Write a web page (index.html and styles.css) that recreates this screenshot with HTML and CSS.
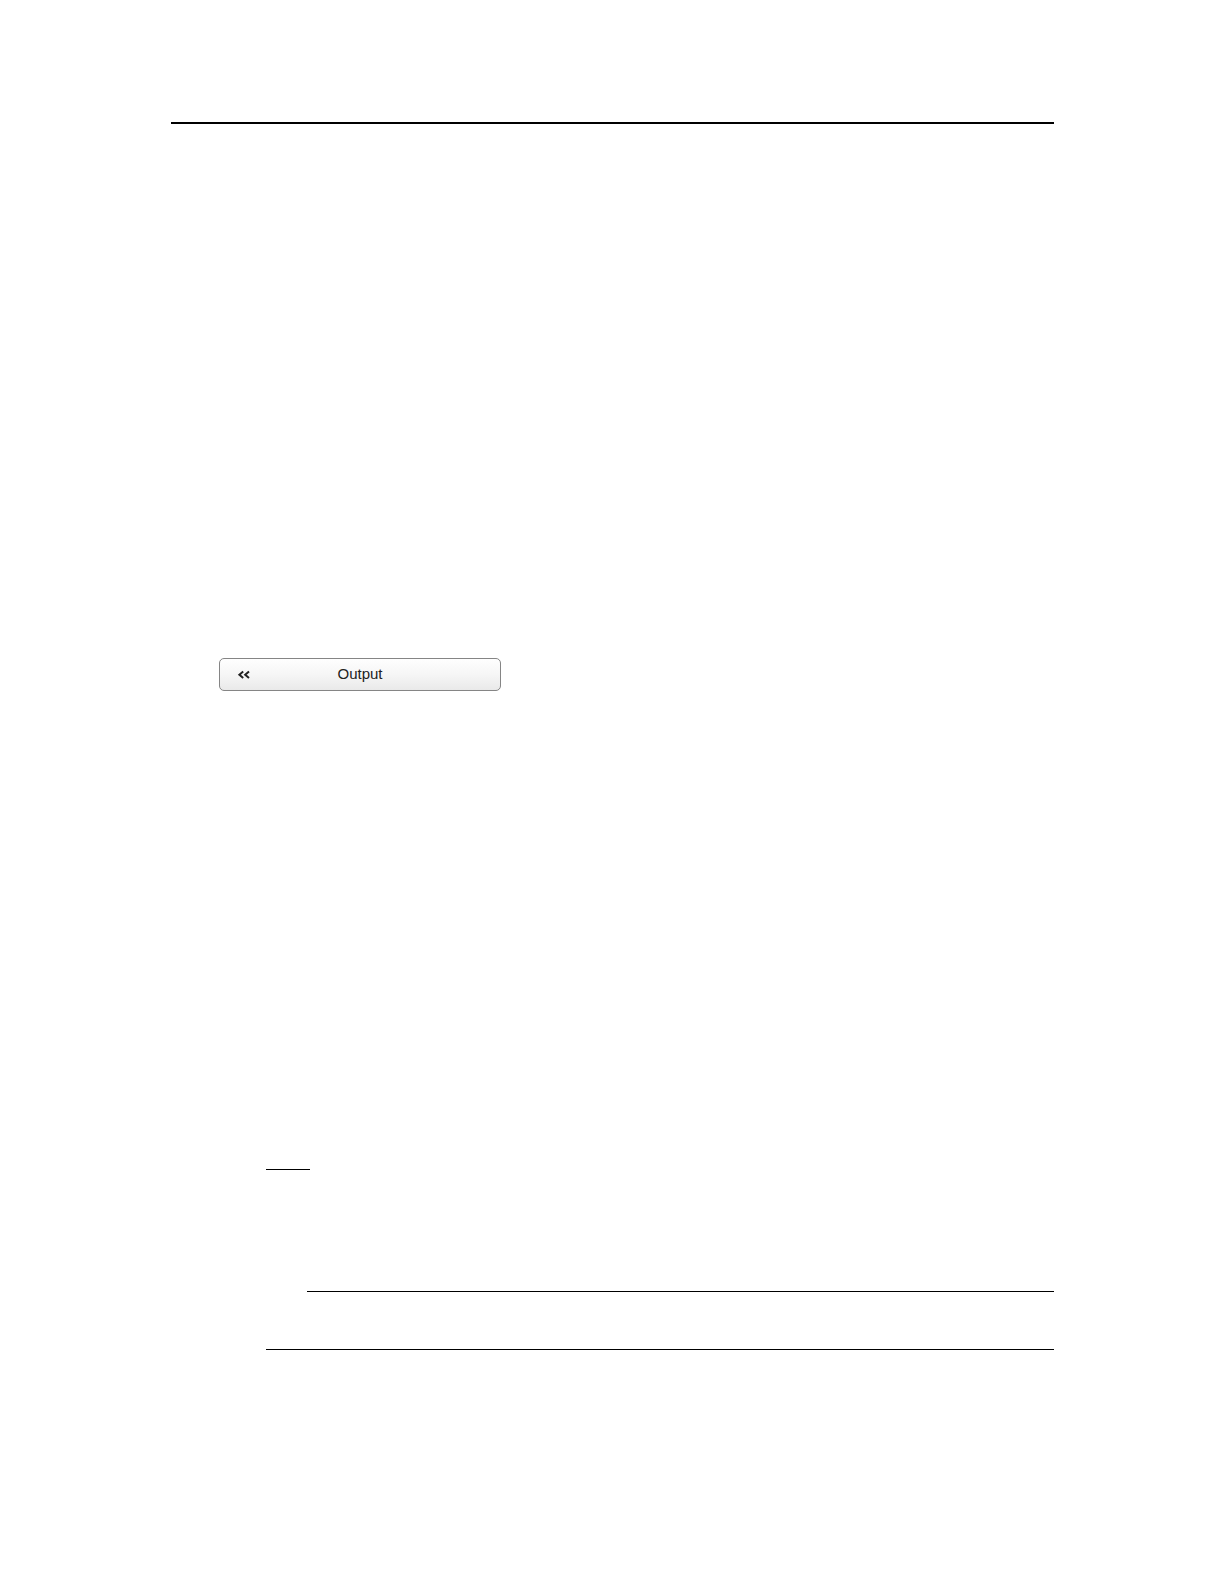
FILE: index.html
```html
<!DOCTYPE html>
<html lang="en">
<head>
<meta charset="utf-8">
<meta name="viewport" content="width=device-width, initial-scale=1">
<title>Output</title>
<link rel="stylesheet" href="styles.css">
</head>
<body>
<main class="page">
  <hr class="rule rule-header">
  <button class="menu-button" type="button">
    <svg class="chevrons" viewBox="0 0 12 8" aria-hidden="true"><path d="M5.2 .6 1.4 3.8 5.2 7M11 .6 7.2 3.8 11 7"/></svg>
    <span class="menu-label">Output</span>
  </button>
  <section class="note">
    <hr class="rule rule-short">
    <hr class="rule rule-indent">
    <hr class="rule rule-close">
  </section>
</main>
</body>
</html>
```
FILE: styles.css
```css
* {
  box-sizing: border-box;
}

body {
  margin: 0;
  background: #fff;
  font-family: "Liberation Sans", Arial, sans-serif;
}

.page {
  min-height: 100vh;
  padding: 122px 170px 120px 171px;
}

.rule {
  height: 1px;
  margin: 0;
  border: 0;
  background: #000;
}

.rule-header {
  height: 2px;
}

.menu-button {
  display: grid;
  grid-template-columns: 12px 1fr 12px;
  align-items: center;
  width: 282px;
  height: 33px;
  margin: 534px 0 0 48px;
  padding: 0 18px;
  border: 1px solid #858585;
  border-radius: 5px;
  background: linear-gradient(#fefefe, #f6f6f6 50%, #e9e9e9);
  color: #222;
  font: inherit;
  font-size: 15px;
  line-height: 17px;
}

.menu-label {
  padding-bottom: 2px;
  text-align: center;
}

.chevrons {
  width: 12px;
  height: 8px;
  overflow: visible;
  fill: none;
  stroke: #222;
  stroke-width: 2;
}

.note {
  margin: 478px 0 0 95px;
}

.rule-short {
  width: 44px;
}

.rule-indent {
  margin: 121px 0 0 41px;
}

.rule-close {
  margin-top: 57px;
}
```
